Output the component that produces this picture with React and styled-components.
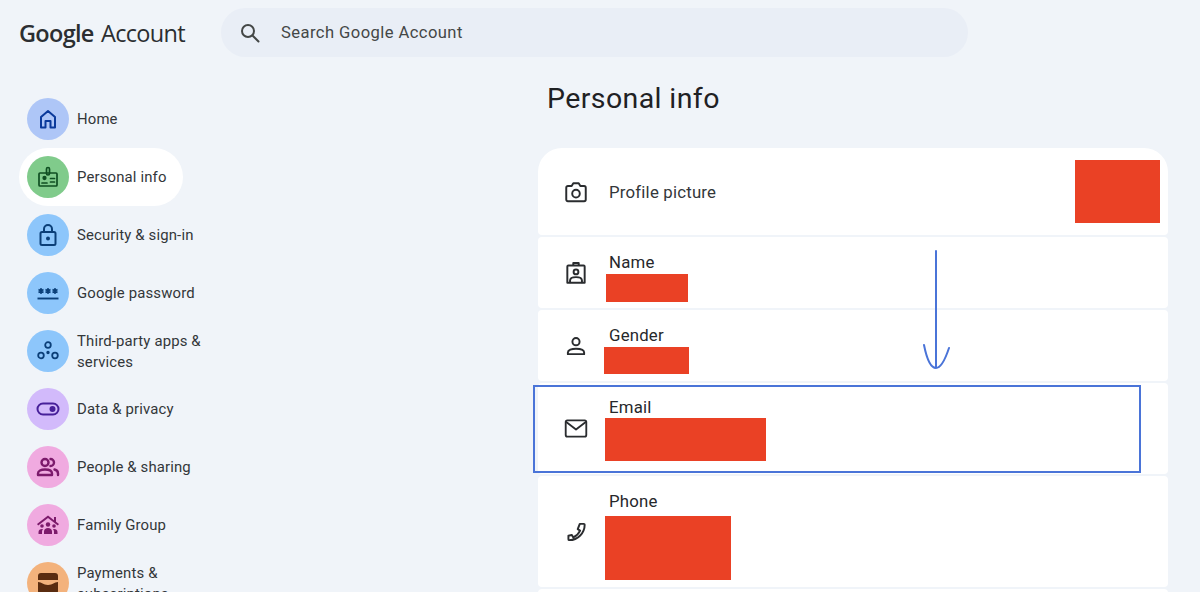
import styled, { createGlobalStyle } from "styled-components";

const GlobalStyle = createGlobalStyle`
    html, body {
        margin: 0;
        height: 592px;
        overflow: hidden;
        background: #f0f4f9;
        font-family: "Roboto", "Liberation Sans", sans-serif;
    }
`;

const line = { fill: "none", stroke: "currentColor", strokeWidth: 2, strokeLinejoin: "round", strokeLinecap: "round" };

const icons = {
    home: <path {...line} d="M5 20.500V10l7-6 7 6v10.500h-4.500v-6.500h-5v6.500z" />,
    badge: (
        <g {...line} strokeWidth="1.700">
            <rect x="3" y="8" width="18" height="13" rx="1" />
            <rect x="10.500" y="2.500" width="3" height="7.500" rx="1.500" />
            <circle cx="8.500" cy="13" r="1.300" fill="currentColor" />
            <path d="M6 18h5M14.500 13.500h4M14.500 17h4" />
        </g>
    ),
    lock: (
        <g {...line}>
            <rect x="4.500" y="9" width="15" height="13" rx="1.500" />
            <path d="M8 9V6a4 4 0 0 1 8 0v3" />
            <circle cx="12" cy="15.500" r="1" fill="currentColor" />
        </g>
    ),
    password: (
        <g {...line} strokeWidth="1.500" strokeLinecap="butt">
            <path d="M5 7v6M2.500 8.500l5 3M7.500 8.500l-5 3" />
            <path d="M12 7v6M9.500 8.500l5 3M14.500 8.500l-5 3" />
            <path d="M19 7v6M16.500 8.500l5 3M21.500 8.500l-5 3" />
            <path d="M1.500 17.500h21" strokeWidth="1.900" />
        </g>
    ),
    apps: (
        <g {...line} strokeWidth="1.800">
            <circle cx="12" cy="6" r="2.800" />
            <circle cx="5" cy="16.500" r="2.800" />
            <circle cx="19" cy="16.500" r="2.800" />
            <circle cx="12" cy="13.500" r="0.800" fill="currentColor" />
        </g>
    ),
    toggle: (
        <g {...line}>
            <rect x="1.500" y="6.500" width="21" height="11" rx="5.500" />
            <circle cx="16.500" cy="12" r="3" fill="currentColor" stroke="none" />
        </g>
    ),
    people: (
        <g {...line} strokeWidth="2.400">
            <circle cx="9" cy="7.500" r="3.500" />
            <path d="M2 20v-1.500c0-2.500 3-4 7-4s7 1.500 7 4V20z" />
            <path d="M14.500 4a3.500 3.500 0 0 1 0 7M18.500 14.500c2.300.6 3.500 2 3.500 4V20" />
        </g>
    ),
    family: (
        <g fill="currentColor">
            <path d="M12 2.500 1 11l1.200 1.500L12 5l9.800 7.500L23 11l-3-2.300V4h-2v3.200z" />
            <circle cx="12" cy="11.500" r="2.200" />
            <circle cx="6" cy="13" r="1.800" />
            <circle cx="18" cy="13" r="1.800" />
            <path d="M8 21v-2.500c0-2 1.800-3.500 4-3.500s4 1.500 4 3.500V21zM2.500 21v-2c0-1.800 1.500-3 3.500-3 .4 0 .7 0 1 .1-.6.8-1 1.600-1 2.600V21zM21.500 21v-2c0-1.800-1.500-3-3.500-3-.4 0-.7 0-1 .1.600.8 1 1.600 1 2.600V21z" />
        </g>
    ),
    wallet: (
        <g fill="currentColor">
            <path d="M5 2h14a3 3 0 0 1 3 3v4H2V5a3 3 0 0 1 3-3z" />
            <path d="M2 11c4 0 5 3 10 3s6-3 10-3v9a2 2 0 0 1-2 2H4a2 2 0 0 1-2-2z" />
        </g>
    ),
    search: (
        <g {...line} strokeWidth="2">
            <circle cx="10" cy="10" r="6" />
            <path d="M14.500 14.500 20.500 20.500" />
        </g>
    ),
    camera: (
        <g {...line} strokeWidth="1.800">
            <path d="M3 8a1.500 1.500 0 0 1 1.500-1.500H8L9.500 4h5L16 6.500h3.500A1.500 1.500 0 0 1 21 8v11a1.500 1.500 0 0 1-1.500 1.500h-15A1.500 1.500 0 0 1 3 19z" />
            <circle cx="12" cy="13.500" r="3.500" />
        </g>
    ),
    contact: (
        <g {...line} strokeWidth="1.800">
            <path d="M5 5h14a1 1 0 0 1 1 1v15H4V6a1 1 0 0 1 1-1zM9.500 5V2.800h5V5" />
            <circle cx="12" cy="11" r="2.200" />
            <path d="M6.500 20.500v-1.500c0-2 2.500-3.200 5.500-3.200s5.500 1.200 5.500 3.200v1.500" />
        </g>
    ),
    person: (
        <g {...line} strokeWidth="1.800">
            <circle cx="12" cy="8" r="3.300" />
            <path d="M4.500 19.500v-1.500c0-2.200 3.500-3.500 7.500-3.500s7.500 1.300 7.500 3.500v1.500z" />
        </g>
    ),
    mail: (
        <g {...line} strokeWidth="1.700">
            <rect x="2.500" y="4" width="19" height="15" rx="1.500" />
            <path d="M3 5.500l9 7 9-7" />
        </g>
    ),
    phone: (
        <g {...line} strokeWidth="1.800">
            <path d="M15.500 4.500h3.700a.8.8 0 0 1 .8.8c0 7.500-6.200 14.200-14.200 14.200a.8.8 0 0 1-.8-.8v-3.200l3.200-.7 1.300 2.200c2.800-1.300 5-3.500 6.300-6.300l-2.200-1.300z" />
        </g>
    ),
};

const navItems = [
    { label: "Home", icon: "home", bg: "#aec6f7", fg: "#0b3a9b" },
    { label: "Personal info", icon: "badge", bg: "#80cb8b", fg: "#0f4f22", active: true },
    { label: "Security & sign-in", icon: "lock", bg: "#8dc6fb", fg: "#0b3f78" },
    { label: "Google password", icon: "password", bg: "#8dc6fb", fg: "#0b3f78" },
    { label: "Third-party apps & services", icon: "apps", bg: "#8dc6fb", fg: "#0b3f78" },
    { label: "Data & privacy", icon: "toggle", bg: "#d2bafb", fg: "#47209a" },
    { label: "People & sharing", icon: "people", bg: "#f0aae0", fg: "#7c1a6b" },
    { label: "Family Group", icon: "family", bg: "#f0aae0", fg: "#7c1a6b" },
    { label: "Payments & subscriptions", icon: "wallet", bg: "#f3b27c", fg: "#5a2c10" },
];

const infoRows = [
    { label: "Name", icon: "contact", height: 71, pad: 16, redact: { w: 82, h: 28, left: -3, top: 3 } },
    { label: "Gender", icon: "person", height: 71, pad: 16, redact: { w: 85, h: 27, left: -5, top: 3 } },
    { label: "Email", icon: "mail", height: 91, pad: 15, redact: { w: 161, h: 43, left: -4, top: 2 }, marked: true },
    { label: "Phone", icon: "phone", height: 111, pad: 16, redact: { w: 126, h: 64, left: -4, top: 6 } },
];

function Icon({ name, size = 24 }) {
    return <svg width={size} height={size} viewBox="0 0 24 24">{icons[name]}</svg>;
}

function App() {
    return (
        <Page>
            <GlobalStyle />
            <Header>
                <Logo><b>Google</b> Account</Logo>
                <SearchBar>
                    <Icon name="search" />
                    <SearchText>Search Google Account</SearchText>
                </SearchBar>
            </Header>
            <Body>
                <Sidebar>
                    {navItems.map((item) => (
                        <NavItem key={item.label} $active={item.active}>
                            <NavCircle $bg={item.bg} $fg={item.fg}>
                                <Icon name={item.icon} />
                            </NavCircle>
                            <NavLabel>{item.label}</NavLabel>
                        </NavItem>
                    ))}
                </Sidebar>
                <Main>
                    <Title>Personal info</Title>
                    <Card>
                        <PictureRow>
                            <IconCell><Icon name="camera" size={26} /></IconCell>
                            <PictureLabel>Profile picture</PictureLabel>
                            <PictureRedact />
                        </PictureRow>
                        {infoRows.map((row) => (
                            <Row key={row.label} $height={row.height}>
                                <IconCell><Icon name={row.icon} size={26} /></IconCell>
                                <RowText $pad={row.pad}>
                                    <RowLabel>{row.label}</RowLabel>
                                    <Redact $w={row.redact.w} $h={row.redact.h} $left={row.redact.left} $top={row.redact.top} />
                                </RowText>
                                {row.marked && <MarkBox />}
                            </Row>
                        ))}
                        <Row $height={40} />
                        <Arrow width="30" height="122" viewBox="0 0 30 122">
                            <path d="M14 1V117M2 95C5 110 9 118 14 118C19 118 23 110 27 98" fill="none" stroke="#4a74d8" strokeWidth="2" strokeLinecap="round" />
                        </Arrow>
                    </Card>
                </Main>
            </Body>
        </Page>
    );
}

export default App;

const Page = styled.div`
    width: 1200px;
    height: 592px;
    overflow: hidden;
    background: #f0f4f9;
    color: #1f1f1f;
`;

const Header = styled.header`
    display: flex;
    align-items: center;
    height: 65px;
    padding: 0 0 0 19px;
    box-sizing: border-box;
`;

const Logo = styled.div`
    width: 202px;
    font-family: "Open Sans", sans-serif;
    font-size: 23.500px;
    letter-spacing: -0.700px;
    word-spacing: 2px;
    color: #2b2e31;
    white-space: nowrap;

    b {
        font-weight: 600;
    }
`;

const SearchBar = styled.div`
    display: flex;
    align-items: center;
    gap: 19px;
    width: 747px;
    height: 49px;
    padding-left: 17px;
    box-sizing: border-box;
    border-radius: 25px;
    background: #e9eef6;
    color: #444746;
`;

const SearchText = styled.span`
    font-size: 16.600px;
    letter-spacing: 0.420px;
`;

const Body = styled.div`
    display: grid;
    grid-template-columns: 538px 630px;
`;

const Sidebar = styled.nav`
    display: flex;
    flex-direction: column;
    align-items: flex-start;
    padding: 25px 0 0 19px;
`;

const NavItem = styled.div`
    display: flex;
    align-items: center;
    gap: 8px;
    height: 58px;
    padding: 0 16px 0 8px;
    box-sizing: border-box;
    border-radius: 29px;
    background: ${(p) => (p.$active ? "#fff" : "transparent")};
`;

const NavCircle = styled.div`
    display: flex;
    align-items: center;
    justify-content: center;
    flex: none;
    width: 42px;
    height: 42px;
    border-radius: 50%;
    background: ${(p) => p.$bg};
    color: ${(p) => p.$fg};
`;

const NavLabel = styled.span`
    max-width: 135px;
    padding-top: 1px;
    font-size: 14.900px;
    line-height: 21px;
    letter-spacing: 0.150px;
    color: #33373a;
`;

const Main = styled.main`
    padding-top: 16px;
`;

const Title = styled.h1`
    margin: 0 0 31px 9px;
    font-size: 28.500px;
    line-height: 36px;
    font-weight: 400;
    letter-spacing: 0.400px;
    color: #1f2124;
`;

const Card = styled.section`
    position: relative;
    display: flex;
    flex-direction: column;
    gap: 2px;
`;

const Row = styled.div`
    position: relative;
    display: flex;
    height: ${(p) => p.$height}px;
    background: #fff;
    border-radius: 4px;
`;

const PictureRow = styled(Row)`
    align-items: center;
    height: 87px;
    padding-right: 8px;
    box-sizing: border-box;
    border-radius: 24px 24px 4px 4px;
`;

const IconCell = styled.div`
    display: flex;
    align-items: center;
    justify-content: center;
    flex: none;
    width: 75px;
    color: #2a2c2f;
    align-self: stretch;
`;

const PictureLabel = styled.span`
    flex: 1;
    margin-left: -4px;
    padding-top: 1px;
    font-size: 16.800px;
    letter-spacing: 0.200px;
    color: #33373a;
`;

const PictureRedact = styled.div`
    width: 85px;
    height: 63px;
    background: #ea4125;
`;

const RowText = styled.div`
    display: flex;
    flex-direction: column;
    align-items: flex-start;
    margin-left: -4px;
    padding-top: ${(p) => p.$pad}px;
`;

const RowLabel = styled.span`
    font-size: 16.800px;
    line-height: 18px;
    letter-spacing: 0.200px;
    color: #26282b;
`;

const Redact = styled.div`
    width: ${(p) => p.$w}px;
    height: ${(p) => p.$h}px;
    margin: ${(p) => p.$top}px 0 0 ${(p) => p.$left}px;
    background: #ea4125;
`;

const MarkBox = styled.div`
    position: absolute;
    top: 2px;
    left: -5px;
    width: 608px;
    height: 88px;
    box-sizing: border-box;
    border: 2px solid #4a74d8;
`;

const Arrow = styled.svg`
    position: absolute;
    top: 102px;
    left: 384px;
`;
